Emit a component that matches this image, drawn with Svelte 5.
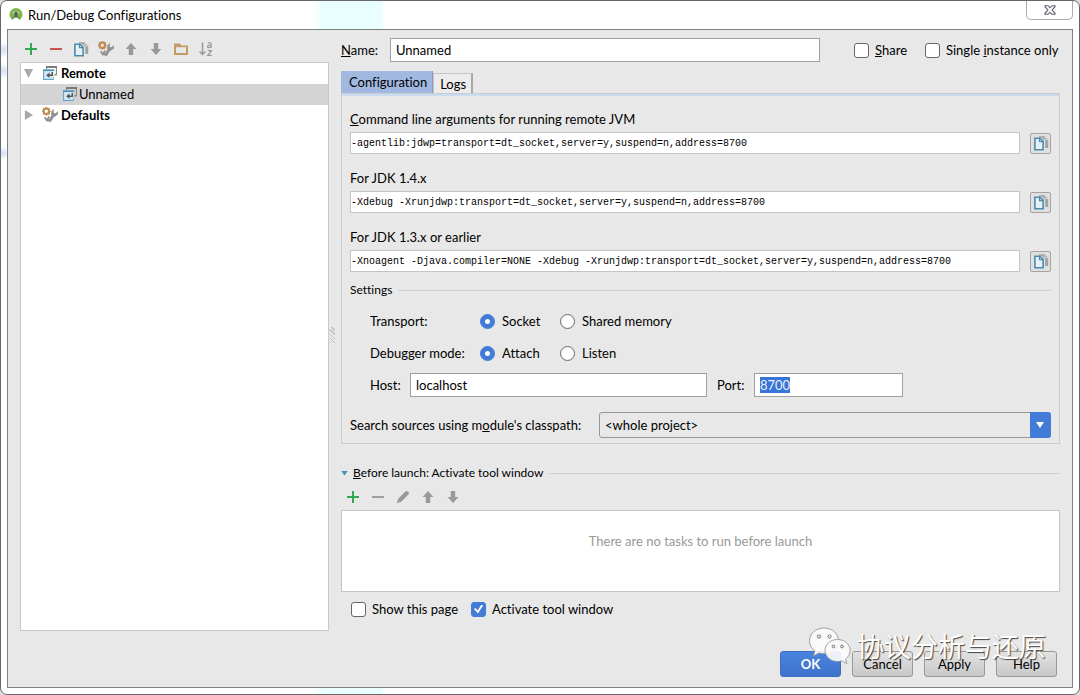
<script lang="ts">
  import { onMount } from 'svelte';

  let name = 'Unnamed';
  let share = false;
  let singleInstance = false;
  let transport = 'socket';
  let mode = 'attach';
  let host = 'localhost';
  let port = '8700';
  let showPage = false;
  let activateWindow = true;
  let portInput: HTMLInputElement;

  $: address = `transport=dt_socket,server=y,suspend=n,address=${port}`;
  $: commands = [
    { id: 'jvm', key: 'C', label: 'ommand line arguments for running remote JVM', value: `-agentlib:jdwp=${address}` },
    { id: 'jdk14', key: '', label: 'For JDK 1.4.x', value: `-Xdebug -Xrunjdwp:${address}` },
    { id: 'jdk13', key: '', label: 'For JDK 1.3.x or earlier', value: `-Xnoagent -Djava.compiler=NONE -Xdebug -Xrunjdwp:${address}` },
  ];

  const treeTools = ['add', 'remove', 'copy', 'wrench', 'up', 'down', 'folder', 'sort'];
  const taskTools = ['add', 'removeOff', 'edit', 'up', 'down'];

  onMount(() => {
    portInput.focus();
    portInput.select();
  });
</script>

{#snippet icon(kind: string)}
  <svg width="16" height="16" viewBox="0 0 16 16" fill="none" aria-hidden="true">
    {#if kind === 'add'}
      <path d="M8 2v12M2 8h12" stroke="#35a853" stroke-width="2" />
    {:else if kind === 'remove'}
      <path d="M2 8h12" stroke="#c75450" stroke-width="2" />
    {:else if kind === 'removeOff'}
      <path d="M2 8h12" stroke="#a0a0a0" stroke-width="2" />
    {:else if kind === 'copy'}
      <path d="M6 1.300h5.500l3.700 3.700v8h-3V6L8.700 2.800H6z" fill="#a2a2a2" />
      <path d="M12 2v2.800h3" stroke="#e8e8e8" stroke-width=".7" />
      <path d="M1.900 3.200h4.900l3.300 3.200v8.300H1.900z" fill="#e6f0f5" stroke="#4b8bad" stroke-width="1.600" />
      <path d="M6.500 3.200v3.500h3.600" stroke="#4b8bad" stroke-width="1.200" />
    {:else if kind === 'wrench'}
      <path d="M7.200 14.800 11.500 8" stroke="#909090" stroke-width="2.800" />
      <path d="M11.900 1.800 9.300 4.300 9.200 8.200l3 1.700L15.900 7.500V4.300l-2.700 2.200-1.700-.9z" fill="#909090" />
      <path d="M2.500 10.300 5 13.500l2.500-.5M7.200 9.500 4.500 14" stroke="#909090" stroke-width="1.700" />
      <circle cx="4.300" cy="4.300" r="2.800" stroke="#c28a4c" stroke-width="2.200" />
      <path d="M4.300 0v1.600M4.300 7v1.600M0 4.300h1.600M7 4.300h1.600M1.200 1.200l1.200 1.200M6.200 6.200l1.200 1.200M7.400 1.200 6.200 2.400M1.200 7.400 2.400 6.200" stroke="#c28a4c" stroke-width="1.100" />
    {:else if kind === 'up'}
      <path d="M8 2 13.400 8H10.200v6H5.800V8H2.600z" fill="#999" />
    {:else if kind === 'down'}
      <path d="M8 14 13.400 8H10.200V2H5.800v6H2.600z" fill="#999" />
    {:else if kind === 'folder'}
      <path d="M1 2.500h6l1.500 2H15V14H1z" fill="#c29b67" />
      <path d="M3 6.200h10V12H3z" fill="#e8e8e8" />
    {:else if kind === 'sort'}
      <path d="M4.500 1.500v12M1.500 10.500l3 3 3-3" stroke="#999" stroke-width="1.500" />
      <path d="M9.800 2.200c1.500-.9 3.400-.6 3.400.9v3.600M13.200 4.300c-2-.1-3.700 0-3.700 1.300 0 1.400 2.500 1.400 3.700-.2M9.800 9.600h3.700l-3.800 4.700h4" stroke="#999" stroke-width="1.200" />
    {:else if kind === 'edit'}
      <path d="M1.800 14.200 3.200 9.800 10.400 2.600q1.200-1.200 2.800.2t.2 2.800L6.200 12.800z" fill="#999" />
    {:else if kind === 'remote'}
      <path d="M4.600 4V1.800h9.800v8H12" stroke="#8a8a8a" stroke-width="1.200" />
      <path d="M4 2h11" stroke="#777" stroke-width="1.800" />
      <path d="M1.600 5v9.300h9.600V11.500" fill="#cfe6f3" stroke="#63a5c8" stroke-width="1.200" />
      <path d="M2.200 6h9v7.700h-9z" fill="#d2e8f4" />
      <path d="M1 5.200h11.200" stroke="#4990b5" stroke-width="1.700" />
      <path d="M10.300 7v3.200H7" stroke="#555" stroke-width="1.500" />
      <path d="M4.200 10.200 7.500 7.400v5.600z" fill="#555" />
    {/if}
  </svg>
{/snippet}

<div class="window">
  <header class="titlebar">
    <svg class="app-icon" width="14" height="14" viewBox="0 0 14 14" aria-hidden="true">
      <circle cx="7" cy="6.500" r="6.500" fill="#7fb549" />
      <path d="M3.400 6.500a3.600 3.600 0 0 1 7.200 0z" fill="#c3d9ab" />
      <path d="M6.500 7.500 2.500 14h9L7.500 7.500z" fill="#fff" />
      <path d="M7 3 10 6.500H8.300V9.500H5.700V6.500H4z" fill="#55664f" />
      <path d="M3.600 9.600q3.400-2 6.800 0" stroke="#5d6b58" stroke-width="1" fill="none" />
    </svg>
    <h1>Run/Debug Configurations</h1>
    <button class="close" aria-label="Close">
      <svg width="12" height="10" viewBox="0 0 12 10" aria-hidden="true">
        <path d="M1 .7h3.100L6 2.800 7.900.7H11v1L8.100 5 11 8.300v1H7.900L6 7.200 4.100 9.300H1v-1L3.900 5 1 1.700z" fill="#fff" stroke="#5a5f6e" stroke-width="1.100" />
      </svg>
    </button>
  </header>

  <main class="client">
    <div class="panes">
      <aside class="sidebar">
        <div class="toolbar">
          {#each treeTools as tool}
            <button class="tool" aria-label={tool}>{@render icon(tool)}</button>
          {/each}
        </div>
        <ul class="tree">
          <li class="group"><span class="arrow open"></span>{@render icon('remote')}<span>Remote</span></li>
          <li class="child selected">{@render icon('remote')}<span>Unnamed</span></li>
          <li class="group"><span class="arrow"></span>{@render icon('wrench')}<span>Defaults</span></li>
        </ul>
      </aside>

      <div class="splitter"><span class="grip"></span></div>

      <section class="editor">
        <div class="name-row">
          <label class="name-label" for="name"><u>N</u>ame:</label>
          <input class="field" id="name" type="text" bind:value={name} />
          <label class="option share"><input type="checkbox" bind:checked={share} /><span><u>S</u>hare</span></label>
          <label class="option single"><input type="checkbox" bind:checked={singleInstance} /><span>Single <u>i</u>nstance only</span></label>
        </div>

        <div class="tabs">
          <button class="tab active">Configuration</button>
          <button class="tab">Logs</button>
        </div>

        <div class="panel">
          {#each commands as command}
            <div class="command">
              <label for={command.id}>{#if command.key}<u>{command.key}</u>{/if}{command.label}</label>
              <div class="command-row">
                <input id={command.id} class="args" type="text" readonly value={command.value} />
                <button class="copy" aria-label="Copy">{@render icon('copy')}</button>
              </div>
            </div>
          {/each}

          <div class="heading"><span>Settings</span></div>

          <div class="settings">
            <div class="radio-row" role="radiogroup" aria-label="Transport">
              <span class="radio-label">Transport:</span>
              <label class="option"><input type="radio" value="socket" bind:group={transport} /><span>Socket</span></label>
              <label class="option"><input type="radio" value="shared" bind:group={transport} /><span>Shared memory</span></label>
            </div>
            <div class="radio-row" role="radiogroup" aria-label="Debugger mode">
              <span class="radio-label">Debugger mode:</span>
              <label class="option"><input type="radio" value="attach" bind:group={mode} /><span>Attach</span></label>
              <label class="option"><input type="radio" value="listen" bind:group={mode} /><span>Listen</span></label>
            </div>
            <div class="address-row">
              <label for="host">Host:</label>
              <input class="field" id="host" type="text" bind:value={host} />
              <label class="port-label" for="port">Port:</label>
              <input class="field" id="port" type="text" bind:value={port} bind:this={portInput} />
            </div>
          </div>

          <div class="source-row">
            <label for="module">Search sources using m<u>o</u>dule's classpath:</label>
            <div class="combo">
              <select id="module">
                <option>&lt;whole project&gt;</option>
              </select>
              <span class="combo-arrow"></span>
            </div>
          </div>
        </div>

        <div class="heading before">
          <span class="fold"></span>
          <span><u>B</u>efore launch: Activate tool window</span>
        </div>
        <div class="toolbar tasks">
          {#each taskTools as tool}
            <button class="tool" aria-label={tool}>{@render icon(tool)}</button>
          {/each}
        </div>
        <div class="task-list">There are no tasks to run before launch</div>
        <div class="launch-options">
          <label class="option"><input type="checkbox" bind:checked={showPage} /><span>Show this page</span></label>
          <label class="option"><input type="checkbox" bind:checked={activateWindow} /><span>Activate tool window</span></label>
        </div>
      </section>
    </div>

    <footer class="buttons">
      <button class="push primary">OK</button>
      <button class="push">Cancel</button>
      <button class="push">Apply</button>
      <button class="push">Help</button>
    </footer>
  </main>

  <div class="watermark">
    <svg width="44" height="38" viewBox="0 0 44 38" aria-hidden="true">
      <g fill="#fbfbfb" fill-opacity=".92" stroke="#8a8a8a" stroke-width=".8">
        <path d="M16 1C7.500 1 1.500 6.800 1.500 13.800c0 4.200 2 7.500 5.300 9.900L5.500 29l5.500-3c1.600.5 3.300.7 5 .7 8.500 0 14.500-5.800 14.500-12.900S24.500 1 16 1z" />
        <path d="M29.500 12.500c-7 0-12.500 4.900-12.500 11s5.500 11 12.500 11c1.500 0 3-.2 4.300-.7l5 2.800-1.300-4.500c2.800-2 4.600-5 4.600-8.600 0-6.100-5.600-11-12.600-11z" />
      </g>
      <g fill="#eee" stroke="#777" stroke-width="1">
        <circle cx="11" cy="9.500" r="1.600" />
        <circle cx="21.500" cy="9.500" r="1.600" />
        <circle cx="25.500" cy="19.500" r="1.400" />
        <circle cx="34" cy="19.500" r="1.400" />
      </g>
    </svg>
    <span>协议分析与还原</span>
  </div>
</div>

<style>
  :global(body) {
    margin: 0;
    background: #ddd;
  }

  .window {
    position: relative;
    display: flex;
    flex-direction: column;
    box-sizing: border-box;
    min-height: 100vh;
    padding: 0 6px 6px;
    border: 1px solid #666;
    border-radius: 7px;
    background:
      radial-gradient(circle at 2px 49px, #cfe0f5 0, transparent 8px),
      radial-gradient(circle at 2px 70px, #cfe0f5 0, transparent 8px),
      radial-gradient(circle at 2px 152px, #cfe0f5 0, transparent 7px),
      linear-gradient(90deg, transparent 312px, #e9feff 322px, #e9feff 380px, transparent 384px),
      #fff;
    color: #000;
    font: 13px/18px Lato, sans-serif;
    font-variant-ligatures: none;
  }

  button, input, select {
    box-sizing: border-box;
    margin: 0;
    color: inherit;
    font: inherit;
    font-variant-ligatures: none;
  }

  input:focus {
    outline: none;
  }

  .titlebar {
    display: flex;
    align-items: center;
    height: 28px;
    padding-left: 2px;
  }

  h1 {
    flex: 1;
    margin: 0 0 0 5px;
    font-size: 13px;
    font-weight: 400;
  }

  .close {
    display: flex;
    align-items: center;
    justify-content: center;
    align-self: flex-start;
    width: 47px;
    height: 19px;
    padding: 0;
    border: 1px solid #aaa;
    border-top: none;
    border-radius: 0 0 5px 5px;
    background: #fff;
  }

  .client {
    flex: 1;
    display: flex;
    flex-direction: column;
    padding: 8px 12px 10px;
    border: 1px solid #808080;
    background: #e8e8e8;
  }

  .panes {
    flex: 1;
    display: flex;
  }

  .sidebar {
    display: flex;
    flex-direction: column;
    width: 309px;
  }

  .toolbar {
    display: flex;
    gap: 9px;
    padding: 3px 3px 5px;
  }

  .tool {
    display: flex;
    padding: 0;
    border: none;
    background: none;
  }

  .tree {
    flex: 1;
    margin: 0;
    padding: 0;
    border: 1px solid #c8c8c8;
    background: #fff;
    list-style: none;
  }

  .tree li {
    display: flex;
    align-items: center;
    box-sizing: border-box;
    height: 21px;
    padding-bottom: 1px;
  }

  .group {
    gap: 3px;
    padding-left: 3px;
    font-weight: 700;
  }

  .child {
    gap: 1px;
    padding-left: 41px;
  }

  .selected {
    background: #d4d4d4;
  }

  .arrow {
    width: 9px;
    height: 10px;
    margin-right: 6px;
    background: #a8a8a8;
    clip-path: polygon(10% 0, 100% 50%, 10% 100%);
  }

  .arrow.open {
    clip-path: polygon(0 10%, 100% 10%, 50% 100%);
  }

  .splitter {
    display: flex;
    align-items: center;
    width: 12px;
  }

  .grip {
    width: 5px;
    height: 16px;
    margin-left: 1px;
    background: repeating-linear-gradient(45deg, #c0c0c0 0 1px, transparent 1px 3px);
  }

  .editor {
    flex: 1;
    min-width: 0;
  }

  .name-row {
    display: flex;
    align-items: center;
  }

  .name-label {
    width: 49px;
  }

  .field {
    min-width: 0;
    height: 24px;
    padding: 0 5px;
    border: 1px solid #a0a0a0;
    background: #fff;
  }

  .field::selection {
    background: #3875d6;
    color: #e8f0ff;
  }

  .name-row .field {
    flex: 1;
  }

  .option {
    display: flex;
    align-items: center;
    gap: 6px;
    white-space: nowrap;
  }

  .share {
    width: 71px;
    margin-left: 34px;
  }

  .single {
    width: 135px;
  }

  input[type='checkbox'], input[type='radio'] {
    display: grid;
    place-items: center;
    flex: none;
    width: 15px;
    height: 15px;
    border: 1px solid #666;
    border-radius: 3px;
    background: #fff;
    appearance: none;
  }

  input[type='radio'] {
    border-radius: 50%;
  }

  input[type='checkbox']:checked, input[type='radio']:checked {
    border-color: #437cd8;
    background: #437cd8;
  }

  input[type='radio']:checked::after {
    width: 5px;
    height: 5px;
    border-radius: 50%;
    background: #fff;
    content: '';
  }

  input[type='checkbox']:checked::after {
    width: 9px;
    height: 9px;
    background: #fff;
    clip-path: polygon(0 50%, 18% 38%, 40% 66%, 82% 0, 100% 10%, 44% 100%);
    content: '';
  }

  .tabs {
    display: flex;
    align-items: flex-end;
    margin-top: 9px;
  }

  .tab {
    height: 20px;
    padding: 0 5px 0 6px;
    border: 1px solid #c4c4c4;
    border-right: 2px solid #a8a8a8;
    border-bottom: none;
    background: #ececec;
  }

  .tab.active {
    height: 22px;
    padding: 0 5px 0 8px;
    border: none;
    border-right: 1px solid #8a9cbd;
    background: #a1b9e0;
  }

  .panel {
    padding: 14px 8px 5px;
    border: 1px solid #ccc;
    box-shadow: inset 0 2px #c9dcf3;
  }

  .command {
    display: flex;
    flex-direction: column;
    gap: 4px;
    margin: 2px 0 15px;
  }

  .command + .command {
    margin-top: 0;
  }

  .command-row {
    display: flex;
    align-items: center;
    gap: 10px;
  }

  .args {
    flex: 1;
    min-width: 0;
    height: 22px;
    padding: 0;
    border: 1px solid #c4c4c4;
    background: #fff;
    font-family: "Liberation Mono", monospace;
    font-size: 10px;
  }

  .copy {
    display: flex;
    align-items: center;
    justify-content: center;
    width: 21px;
    height: 21px;
    padding: 0;
    border: 1px solid #a4a4a4;
    border-radius: 2px;
    background: #e0e0e0;
  }

  .heading {
    display: flex;
    align-items: center;
    font-size: 12px;
  }

  .panel .heading {
    margin-top: -6px;
  }

  .heading::after {
    flex: 1;
    height: 1px;
    margin-left: 6px;
    background: #d0d0d0;
    content: '';
  }

  .settings {
    padding: 6px 0 0 20px;
  }

  .radio-row {
    display: flex;
    align-items: center;
    height: 32px;
  }

  .radio-label {
    width: 110px;
  }

  .radio-row .option {
    min-width: 80px;
    gap: 7px;
  }

  .address-row {
    display: grid;
    grid-template-columns: 40px 2fr 47px 1fr 1fr;
    align-items: center;
    margin-top: 4px;
  }

  .port-label {
    padding-left: 10px;
  }

  .source-row {
    display: flex;
    align-items: center;
    margin-top: 15px;
    white-space: nowrap;
  }

  .source-row label {
    width: 249px;
  }

  .combo {
    position: relative;
    flex: 1;
  }

  select {
    display: block;
    width: 100%;
    height: 26px;
    padding: 0 26px 0 5px;
    border: 1px solid #969696;
    border-radius: 3px;
    background: #e8e8e8;
    appearance: none;
  }

  .combo-arrow {
    position: absolute;
    top: 0;
    right: 0;
    bottom: 0;
    width: 21px;
    border-radius: 0 3px 3px 0;
    background: #437cd8;
    pointer-events: none;
  }

  .combo-arrow::after {
    display: block;
    width: 8px;
    height: 6px;
    margin: 10px 6px;
    background: #fff;
    clip-path: polygon(0 0, 100% 0, 50% 100%);
    content: '';
  }

  .before {
    margin-top: 20px;
  }

  .fold {
    width: 7px;
    height: 5px;
    margin-right: 5px;
    background: #3f93bd;
    clip-path: polygon(0 0, 100% 0, 50% 100%);
  }

  .tasks {
    padding: 7px 4px 5px;
  }

  .task-list {
    box-sizing: border-box;
    height: 82px;
    padding-top: 21px;
    border: 1px solid #c4c4c4;
    background: #fff;
    color: #999;
    text-align: center;
  }

  .launch-options {
    display: flex;
    gap: 13px;
    padding: 8px 10px 0;
  }

  .buttons {
    display: flex;
    justify-content: flex-end;
    gap: 11px;
    margin-top: 20px;
    padding-right: 3px;
  }

  .push {
    width: 61px;
    height: 26px;
    padding: 0;
    border: 1px solid #999;
    border-radius: 3px;
    background: linear-gradient(#e2e2e2, #c8c8c8);
  }

  .primary {
    border-color: #3d6fc0;
    background: linear-gradient(#4a83de, #3f73cd);
    color: #fff;
    font-weight: 700;
  }

  .watermark {
    position: absolute;
    right: 33px;
    bottom: 28px;
    display: flex;
    align-items: center;
    gap: 5px;
    color: #fff;
    font: 27px/40px "Noto Sans CJK SC", sans-serif;
    text-shadow: 1px 1px 1px #444;
    pointer-events: none;
  }
</style>
